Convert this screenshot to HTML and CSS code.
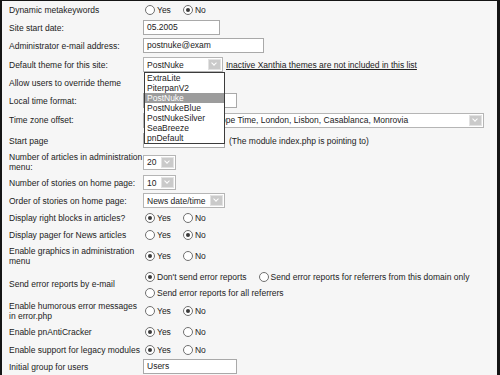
FILE: index.html
```html
<!DOCTYPE html>
<html>
<head>
<meta charset="utf-8">
<title>Site settings</title>
<link rel="stylesheet" href="styles.css">
</head>
<body>
<div class="frame">
<table class="settings">
	<tr class="h18">
		<td class="label">Dynamic metakeywords</td>
		<td class="value"><span class="opt"><i class="radio"></i>Yes</span><span class="opt"><i class="radio on"></i>No</span></td>
	</tr>
	<tr class="h17">
		<td class="label">Site start date:</td>
		<td class="value"><div class="field w-date">05.2005</div></td>
	</tr>
	<tr class="h19">
		<td class="label">Administrator e-mail address:</td>
		<td class="value"><div class="field w-mail">postnuke@exam</div></td>
	</tr>
	<tr class="h19">
		<td class="label">Default theme for this site:</td>
		<td class="value">
			<div class="line">
				<div class="drop">
					<div class="select w-theme">PostNuke<span class="arrow"></span></div>
					<ul class="droplist">
						<li>ExtraLite</li>
						<li>PiterpanV2</li>
						<li class="sel">PostNuke</li>
						<li>PostNukeBlue</li>
						<li>PostNukeSilver</li>
						<li>SeaBreeze</li>
						<li>pnDefault</li>
					</ul>
				</div>
				<a class="note">Inactive Xanthia themes are not included in this list</a>
			</div>
		</td>
	</tr>
	<tr class="h17">
		<td class="label">Allow users to override theme</td>
		<td class="value"></td>
	</tr>
	<tr class="h19">
		<td class="label">Local time format:</td>
		<td class="value"><div class="field w-time"></div></td>
	</tr>
	<tr class="h20">
		<td class="label">Time zone offset:</td>
		<td class="value"><div class="select w-zone">(GMT) Western Europe Time, London, Lisbon, Casablanca, Monrovia<span class="arrow"></span></div></td>
	</tr>
	<tr class="h21">
		<td class="label">Start page</td>
		<td class="value"><div class="line"><div class="field w-start"></div><span class="hint">(The module index.php is pointing to)</span></div></td>
	</tr>
	<tr class="h22">
		<td class="label">Number of articles in administration<br>menu:</td>
		<td class="value"><div class="select w-num">20<span class="arrow"></span></div></td>
	</tr>
	<tr class="h19">
		<td class="label">Number of stories on home page:</td>
		<td class="value"><div class="select w-num">10<span class="arrow"></span></div></td>
	</tr>
	<tr class="h17">
		<td class="label">Order of stories on home page:</td>
		<td class="value"><div class="select w-order">News date/time<span class="arrow"></span></div></td>
	</tr>
	<tr class="h17">
		<td class="label">Display right blocks in articles?</td>
		<td class="value"><span class="opt"><i class="radio on"></i>Yes</span><span class="opt"><i class="radio"></i>No</span></td>
	</tr>
	<tr class="h18">
		<td class="label">Display pager for News articles</td>
		<td class="value"><span class="opt"><i class="radio"></i>Yes</span><span class="opt"><i class="radio on"></i>No</span></td>
	</tr>
	<tr class="h24">
		<td class="label">Enable graphics in administration<br>menu</td>
		<td class="value"><span class="opt"><i class="radio on"></i>Yes</span><span class="opt"><i class="radio"></i>No</span></td>
	</tr>
	<tr class="h26">
		<td class="label">Send error reports by e-mail</td>
		<td class="value">
			<div class="opts">
				<span class="opt"><i class="radio on"></i>Don't send error reports</span><span class="opt"><i class="radio"></i>Send error reports for referrers from this domain only</span>
			</div>
			<div class="opts">
				<span class="opt"><i class="radio"></i>Send error reports for all referrers</span>
			</div>
		</td>
	</tr>
	<tr class="h22">
		<td class="label">Enable humorous error messages<br>in error.php</td>
		<td class="value"><span class="opt"><i class="radio"></i>Yes</span><span class="opt"><i class="radio on"></i>No</span></td>
	</tr>
	<tr class="h19">
		<td class="label">Enable pnAntiCracker</td>
		<td class="value"><span class="opt"><i class="radio on"></i>Yes</span><span class="opt"><i class="radio"></i>No</span></td>
	</tr>
	<tr class="h17">
		<td class="label">Enable support for legacy modules</td>
		<td class="value"><span class="opt"><i class="radio on"></i>Yes</span><span class="opt"><i class="radio"></i>No</span></td>
	</tr>
	<tr class="h17">
		<td class="label">Initial group for users</td>
		<td class="value"><div class="field w-time">Users</div></td>
	</tr>
	<tr class="h17">
		<td class="label">Choose the language to use for</td>
		<td class="value"><div class="field w-lang"></div></td>
	</tr>
</table>
</div>
</body>
</html>
```

FILE: styles.css
```css
body{margin:0;background:#151515;font:8.5px "Liberation Sans",Arial,sans-serif;color:#222;}
.frame{margin:1px 3px 0 2px;height:374px;overflow:hidden;background:#f6f6f6;}
.settings{border-collapse:collapse;}
.settings td{padding:0;vertical-align:middle;}
.settings td.label{width:134px;padding-left:7px;line-height:10px;}
.h17{height:17px;}
.h18{height:18px;}
.h19{height:19px;}
.h20{height:20px;}
.h21{height:21px;}
.h22{height:22px;}
.h24{height:24px;}
.h26{height:26px;}

.line{display:flex;align-items:center;}
.opts{display:flex;align-items:center;height:16px;}
.opt{display:inline-flex;align-items:center;margin-right:10px;padding-top:2px;}
.radio{display:inline-block;position:relative;width:8px;height:8px;margin:0 2px 0 2px;border:1px solid #707070;border-radius:50%;background:#fff;}
.radio.on:after{content:"";position:absolute;left:2px;top:2px;width:4px;height:4px;border-radius:50%;background:#3a3a3a;}

.field{box-sizing:border-box;height:15px;padding:0 3px;border:1px solid #a9a9a9;background:#fff;line-height:13px;white-space:nowrap;overflow:hidden;}
.w-date{width:77px;}
.w-mail{width:121px;}
.w-time{width:94px;}
.w-start{width:82px;}
.w-lang{width:196px;}

.select{box-sizing:border-box;display:flex;align-items:center;justify-content:space-between;height:15px;padding-left:3px;border:1px solid #b5b5b5;background:#fff;white-space:nowrap;overflow:hidden;}
.arrow{flex:none;width:13px;height:11px;margin:0 1px 0 4px;background:#cacaca;border:1px solid #e2e2e2;box-sizing:border-box;position:relative;}
.arrow:after{content:"";position:absolute;left:3px;top:1px;width:3px;height:3px;border-right:1px solid #fff;border-bottom:1px solid #fff;transform:rotate(45deg);}
.w-theme{width:80px;}
.w-num{width:33px;}
.w-order{width:82px;}
.w-zone{width:341px;}

.drop{position:relative;}
.droplist{position:absolute;left:1px;top:15px;z-index:2;width:79px;margin:0;padding:0;list-style:none;border:1px solid #3c3c3c;background:#fff;}
.droplist li{height:10px;line-height:10px;padding-left:2px;}
.droplist li.sel{background:#9c9c9c;color:#fff;}

.note{margin-left:3px;color:#222;text-decoration:underline;}
.hint{margin-left:4px;}
```
